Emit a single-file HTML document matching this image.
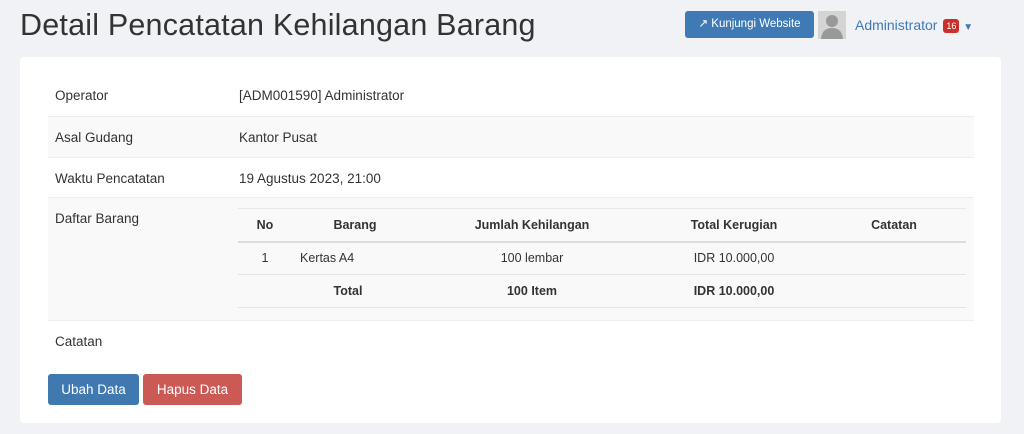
<!DOCTYPE html>
<html><head><style>
*{box-sizing:border-box;margin:0;padding:0}
body{width:1024px;height:434px;background:#f1f2f6;font-family:"Liberation Sans",sans-serif;color:#333;position:relative;overflow:hidden;font-size:13px}
h1{position:absolute;left:20px;top:8px;font-size:30.5px;font-weight:normal;color:#333;letter-spacing:0.2px}
.btnw{position:absolute;left:685px;top:11px;width:129px;height:27px;background:#3f7ab5;border-radius:3px;color:#fff;font-size:11.5px;line-height:27px;text-align:center}
.av{position:absolute;left:818px;top:11px;width:28px;height:28px;background:#d4d4d4;overflow:hidden}
.admin{position:absolute;left:855px;top:17px;color:#3f7ab5;font-size:14px}
.badge{display:inline-block;background:#c9302c;color:#fff;font-size:9px;border-radius:3px;padding:2px 3px;vertical-align:1px;margin-left:2px}
.card{position:absolute;left:20px;top:57px;width:981px;height:366px;background:#fff;border-radius:4px}
.row{position:absolute;left:28px;width:926px;border-top:1px solid #eceef0}
.row .l{position:absolute;left:7px;top:13px;font-size:13.5px}
.row .v{position:absolute;left:191px;top:13px;font-size:13.5px}
.s{background:#f9f9f9}
table{position:absolute;left:190px;top:10px;width:728px;border-collapse:collapse;font-size:12.5px}
td,th{text-align:center;height:33px}
th{border-bottom:2px solid #ddd}
tr.b td,tr.b th{border-bottom:1px solid #e4e4e4}
.btn{position:absolute;top:317px;height:31px;color:#fff;font-size:13.5px;line-height:31px;text-align:center;border-radius:3px}
</style></head><body>
<h1>Detail Pencatatan Kehilangan Barang</h1>
<div class="btnw">&#x2197;&#xFE0E; Kunjungi Website</div>
<div class="av"><svg width="28" height="28"><circle cx="14" cy="10" r="6" fill="#999"/><path d="M3 28 Q4 17 14 17 Q24 17 25 28Z" fill="#999"/></svg></div>
<div class="admin">Administrator <span class="badge">16</span> <span style="font-size:10px">&#9660;</span></div>
<div class="card">
<div class="row" style="top:18px;height:41px;border-top:none"><span class="l">Operator</span><span class="v">[ADM001590] Administrator</span></div>
<div class="row s" style="top:59px;height:41px"><span class="l">Asal Gudang</span><span class="v">Kantor Pusat</span></div>
<div class="row" style="top:100px;height:40px"><span class="l">Waktu Pencatatan</span><span class="v">19 Agustus 2023, 21:00</span></div>
<div class="row s" style="top:140px;height:123px"><span class="l">Daftar Barang</span>
<table><tr style="border-top:1px solid #e8e8e8"><th style="width:54px">No</th><th style="width:126px">Barang</th><th style="width:228px">Jumlah Kehilangan</th><th style="width:176px">Total Kerugian</th><th>Catatan</th></tr>
<tr class="b"><td>1</td><td style="text-align:left;padding-left:8px">Kertas A4</td><td>100 lembar</td><td>IDR 10.000,00</td><td></td></tr>
<tr class="b"><th colspan="2" style="padding-left:40px">Total</th><th>100 Item</th><th>IDR 10.000,00</th><td></td></tr>
</table></div>
<div class="row" style="top:263px;height:40px"><span class="l">Catatan</span></div>
<div class="btn" style="left:28px;width:91px;background:#4078b0">Ubah Data</div>
<div class="btn" style="left:123px;width:99px;background:#cb5a55">Hapus Data</div>
</div>
</body></html>
